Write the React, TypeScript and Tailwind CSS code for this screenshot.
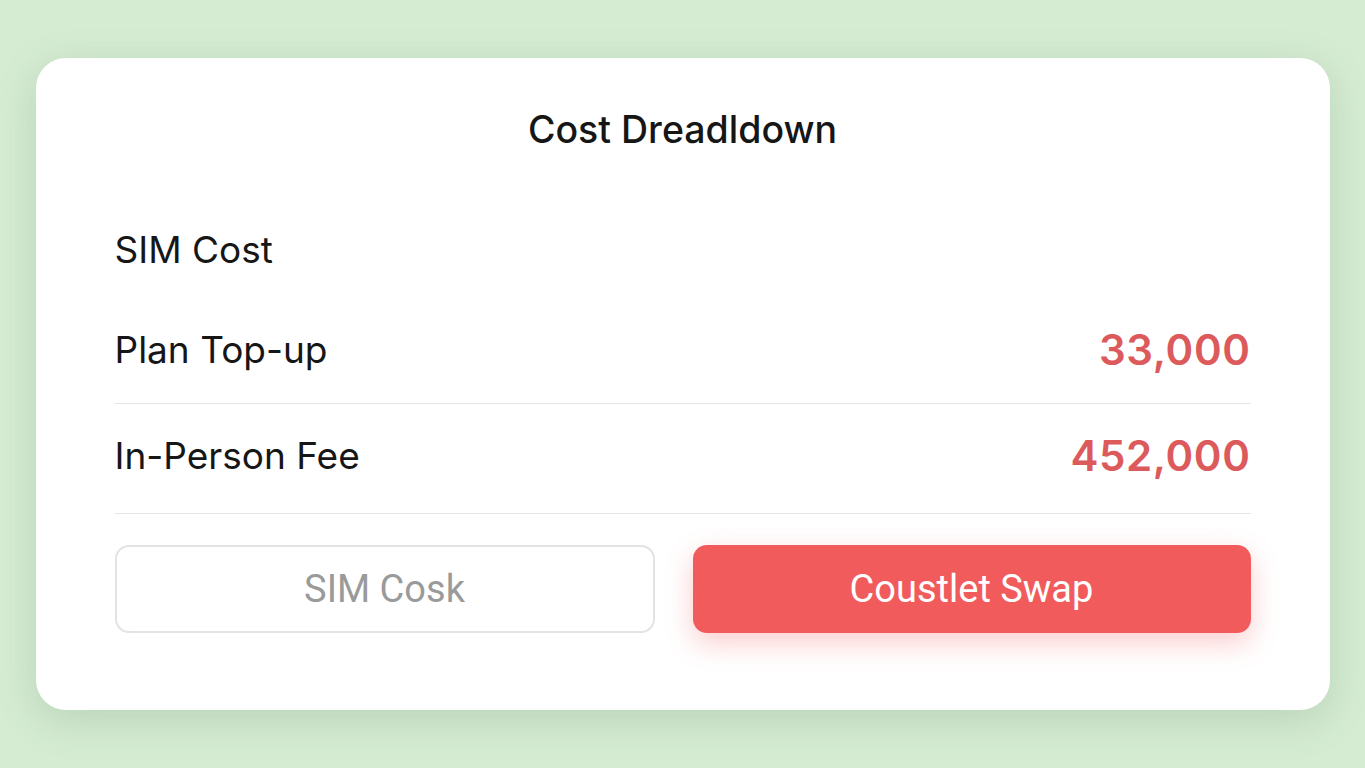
export default function App() {
  return (
    <div className="min-h-screen w-full bg-[#d5ecd3] flex items-center justify-center" style={{ fontFamily: "Inter, 'Liberation Sans', sans-serif" }}>
      <div className="w-[1294px] h-[652px] bg-white rounded-[30px] shadow-[0_10px_40px_rgba(60,100,60,0.18)] px-[79px] pt-[50px] flex flex-col">
        <h1 className="h-[44px] leading-[44px] text-center text-[37.5px] font-medium text-[#161616]">Cost Dreadldown</h1>

        <div className="mt-[48px] h-[100px] flex items-center justify-between">
          <span className="text-[37px] text-[#161616]">SIM Cost</span>
        </div>

        <div className="h-[104px] pb-[4px] flex items-center justify-between border-b border-[#e6e6e6]">
          <span className="text-[37px] text-[#161616]">Plan Top-up</span>
          <span className="text-[42px] font-semibold tracking-[0.6px] text-[#dc5a5c]">33,000</span>
        </div>

        <div className="h-[110px] pb-[6px] flex items-center justify-between border-b border-[#e6e6e6]">
          <span className="text-[37px] text-[#161616]">In-Person Fee</span>
          <span className="text-[42px] font-semibold tracking-[0.6px] text-[#dc5a5c]">452,000</span>
        </div>

        <div className="mt-[31px] flex gap-[38px]" style={{ fontFamily: "Roboto, 'Liberation Sans', sans-serif" }}>
          <button className="w-[540px] h-[88px] rounded-[14px] border-2 border-[#e3e3e3] bg-white text-[38px] text-[#9a9a9a]">SIM Cosk</button>
          <button className="flex-1 h-[88px] rounded-[14px] bg-[#f25b5c] text-[38px] text-white shadow-[0_10px_28px_rgba(242,91,92,0.3)]">Coustlet Swap</button>
        </div>
      </div>
    </div>
  );
}
